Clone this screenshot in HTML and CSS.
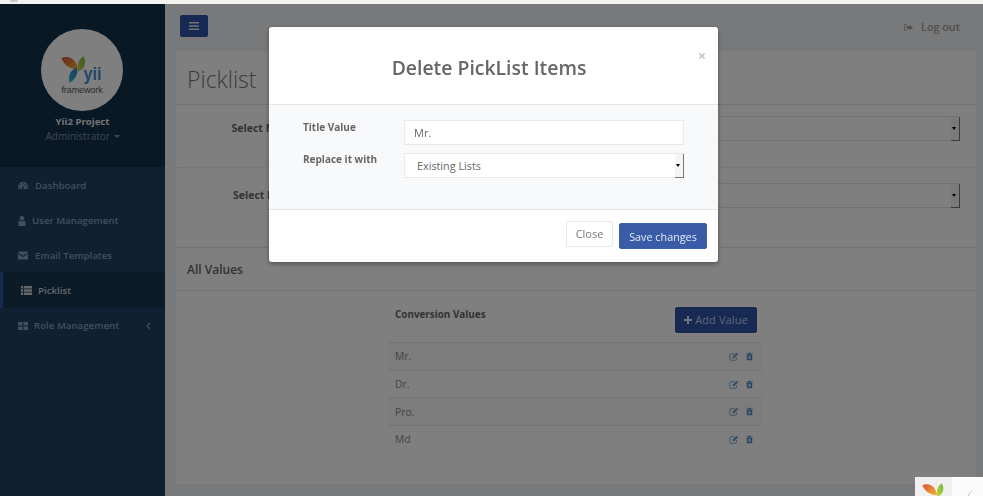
FILE: index.html
```html
<!DOCTYPE html>
<html lang="en">
<head>
<meta charset="utf-8">
<title>Picklist</title>
<link rel="stylesheet" href="styles.css">
</head>
<body>
<svg class="defs" width="0" height="0" aria-hidden="true">
  <defs>
    <linearGradient id="gOrange" x1="0" y1="0" x2="1" y2="1"><stop offset="0" stop-color="#d9503a"/><stop offset="1" stop-color="#f2b431"/></linearGradient>
    <linearGradient id="gGreen" x1="0" y1="1" x2="1" y2="0"><stop offset="0" stop-color="#c6d63c"/><stop offset="1" stop-color="#72b53f"/></linearGradient>
    <linearGradient id="gBlue" x1="1" y1="0" x2="0" y2="1"><stop offset="0" stop-color="#2f7fc0"/><stop offset="1" stop-color="#37b3d6"/></linearGradient>
    <symbol id="leaves" viewBox="0 0 30 32">
      <path d="M0.5 2.5C6 -0.5 15 1 18.5 11C19.3 13 19.6 14.5 19.6 15.5C15 14.8 5 14 0.5 2.5Z" fill="url(#gOrange)"/>
      <path d="M26 0C28.5 5 29 12 23 16C21.5 17 20.6 17.5 20 18C18.5 11 19.5 4 26 0Z" fill="url(#gGreen)"/>
      <path d="M18 13.5C20 16.5 19 25 10 31C8 24 9.5 17 18 13.5Z" fill="url(#gBlue)"/>
    </symbol>
    <symbol id="leaves-top" viewBox="0 0 30 20">
      <path d="M0.5 2.5C6 -0.5 15 1 18.5 11C19.3 13 19.6 14.5 19.6 15.5C15 14.8 5 14 0.5 2.5Z" fill="url(#gOrange)"/>
      <path d="M26 0C28.5 5 29 12 23 16C21.5 17 20.6 17.5 20 18C18.5 11 19.5 4 26 0Z" fill="url(#gGreen)"/>
    </symbol>
    <symbol id="i-edit" viewBox="0 0 14 13"><path d="M10.5 7.5V10.5A1.5 1.5 0 0 1 9 12H2.5A1.5 1.5 0 0 1 1 10.5V4A1.5 1.5 0 0 1 2.5 2.5H8" fill="none" stroke="currentColor" stroke-width="1.2"/><path d="M5 6.8L10.8 1L13 3.2L7.2 9H5Z" fill="currentColor"/></symbol>
    <symbol id="i-trash" viewBox="0 0 11 13"><path d="M4 0.5H7L7.7 2H10.5V3.2H0.5V2H3.3ZM1.3 4H9.7V11.2A1.3 1.3 0 0 1 8.4 12.5H2.6A1.3 1.3 0 0 1 1.3 11.2ZM3 5.5V11H4V5.5ZM5 5.5V11H6V5.5ZM7 5.5V11H8V5.5Z" fill="currentColor" fill-rule="evenodd"/></symbol>
  </defs>
</svg>

<div class="top-strip"><span class="top-mark"></span></div>
<div class="app">
  <aside class="sidebar">
    <div class="profile">
      <div class="avatar">
        <div class="yii-mark">
          <svg class="yii-leaves"><use href="#leaves"/></svg>
          <span class="yii-word">yii</span>
        </div>
        <span class="yii-framework">framework</span>
      </div>
      <div class="profile-name">Yii2 Project</div>
      <div class="profile-role">Administrator <span class="caret"></span></div>
    </div>
    <nav class="nav">
      <a class="nav-item">
        <svg class="nav-icon" viewBox="0 0 14 11"><path d="M7 0.5A7 7 0 0 0 0 7.5C0 8.8 0.3 9.8 0.9 10.5H13.1C13.7 9.8 14 8.8 14 7.5A7 7 0 0 0 7 0.5ZM7 2A1 1 0 1 1 7 4A1 1 0 0 1 7 2ZM3 3.5A1 1 0 1 1 3 5.5A1 1 0 0 1 3 3.5ZM11 3.5A1 1 0 1 1 11 5.5A1 1 0 0 1 11 3.5ZM2 6.8A1 1 0 1 1 2 8.8A1 1 0 0 1 2 6.8ZM12 6.8A1 1 0 1 1 12 8.8A1 1 0 0 1 12 6.8ZM9 4.5L9.7 4.9L8 7.8A1.4 1.4 0 1 1 7.2 7.4Z" fill="currentColor" fill-rule="evenodd"/></svg>
        <span>Dashboard</span>
      </a>
      <a class="nav-item nav-item-narrow">
        <svg class="nav-icon-user" viewBox="0 0 8 11"><path d="M4 0A2.6 2.6 0 1 1 4 5.2A2.6 2.6 0 0 1 4 0ZM1.4 5.2C2 5.8 3 6 4 6C5 6 6 5.8 6.6 5.2C7.6 5.4 8 6.4 8 9C8 10.2 7.4 11 6.4 11H1.6C0.6 11 0 10.2 0 9C0 6.4 0.4 5.4 1.4 5.2Z" fill="currentColor"/></svg>
        <span>User Management</span>
      </a>
      <a class="nav-item">
        <svg class="nav-icon" viewBox="0 0 14 11"><path d="M1 0H13A1 1 0 0 1 14 1V1.6L7 6L0 1.6V1A1 1 0 0 1 1 0ZM0 3.2L7 7.6L14 3.2V10A1 1 0 0 1 13 11H1A1 1 0 0 1 0 10Z" fill="currentColor"/></svg>
        <span>Email Templates</span>
      </a>
      <a class="nav-item nav-item-active">
        <svg class="nav-icon" viewBox="0 0 11 9"><path d="M0 0H2.2V2.4H0ZM3 0H11V2.4H3ZM0 3.3H2.2V5.7H0ZM3 3.3H11V5.7H3ZM0 6.6H2.2V9H0ZM3 6.6H11V9H3Z" fill="currentColor"/></svg>
        <span>Picklist</span>
      </a>
      <a class="nav-item nav-item-split">
        <svg class="nav-icon-grid" viewBox="0 0 10 8"><path d="M0 0H4.5V3.5H0ZM5.5 0H10V3.5H5.5ZM0 4.5H4.5V8H0ZM5.5 4.5H10V8H5.5Z" fill="currentColor"/></svg>
        <span class="nav-label">Role Management</span>
        <svg class="nav-angle" viewBox="0 0 5 8"><path d="M4 1L1 4L4 7" fill="none" stroke="currentColor" stroke-width="1.1"/></svg>
      </a>
    </nav>
  </aside>

  <main class="main">
    <header class="topbar">
      <button class="toggle" type="button" aria-label="Menu">
        <svg viewBox="0 0 10 8" width="10" height="8"><path d="M0 0H10V1.6H0ZM0 3.2H10V4.8H0ZM0 6.4H10V8H0Z" fill="currentColor"/></svg>
      </button>
      <a class="logout">
        <svg class="logout-icon" viewBox="0 0 11 9"><path d="M4 0.5V1.5H1.6C1.3 1.5 1 1.8 1 2.1V6.9C1 7.2 1.3 7.5 1.6 7.5H4V8.5H1.6C0.7 8.5 0 7.8 0 6.9V2.1C0 1.2 0.7 0.5 1.6 0.5ZM6.5 1L11 4.5L6.5 8V6H3V3H6.5Z" fill="currentColor"/></svg>
        <span>Log out</span>
      </a>
    </header>

    <section class="panel">
      <h1 class="panel-title">Picklist</h1>
      <div class="panel-form">
        <div class="form-row form-row-dotted">
          <label class="form-label">Select Module</label>
          <div class="select-box">
            <span class="select-arrow"></span>
          </div>
        </div>
        <div class="form-row">
          <label class="form-label">Select Picklist</label>
          <div class="select-box">
            <span class="select-arrow"></span>
          </div>
        </div>
      </div>
      <h2 class="section-title">All Values</h2>
      <div class="values">
        <div class="values-head">
          <strong class="values-title">Conversion Values</strong>
          <button class="add-btn" type="button"><svg class="add-plus" viewBox="0 0 8 8"><path d="M3 0H5V3H8V5H5V8H3V5H0V3H3Z" fill="currentColor"/></svg>Add Value</button>
        </div>
        <div class="value-row value-row-alt"><span>Mr.</span><span class="row-icons"><svg class="ic-edit"><use href="#i-edit"/></svg><svg class="ic-trash"><use href="#i-trash"/></svg></span></div>
        <div class="value-row"><span>Dr.</span><span class="row-icons"><svg class="ic-edit"><use href="#i-edit"/></svg><svg class="ic-trash"><use href="#i-trash"/></svg></span></div>
        <div class="value-row value-row-alt"><span>Pro.</span><span class="row-icons"><svg class="ic-edit"><use href="#i-edit"/></svg><svg class="ic-trash"><use href="#i-trash"/></svg></span></div>
        <div class="value-row"><span>Md</span><span class="row-icons"><svg class="ic-edit"><use href="#i-edit"/></svg><svg class="ic-trash"><use href="#i-trash"/></svg></span></div>
      </div>
    </section>
  </main>
</div>

<div class="backdrop"></div>

<div class="modal" role="dialog">
  <div class="modal-head">
    <h3 class="modal-title">Delete PickList Items</h3>
    <span class="modal-x">×</span>
  </div>
  <div class="modal-body">
    <div class="modal-row">
      <label class="modal-label">Title Value</label>
      <div class="modal-input">Mr.</div>
    </div>
    <div class="modal-row">
      <label class="modal-label modal-label-tight">Replace it with</label>
      <div class="select-box modal-select">Existing Lists<span class="select-arrow"></span></div>
    </div>
  </div>
  <div class="modal-foot">
    <button class="btn-close" type="button">Close</button>
    <button class="btn-save" type="button">Save changes</button>
  </div>
</div>

<div class="corner">
  <div class="corner-logo"><svg class="corner-leaves"><use href="#leaves-top"/></svg></div>
  <div class="corner-side"><svg class="corner-angle" viewBox="0 0 6 10"><path d="M5 1L1 5L5 9" fill="none" stroke="currentColor" stroke-width="1"/></svg></div>
</div>
</body>
</html>
```

FILE: styles.css
```css
* { box-sizing: border-box; }
html, body { margin: 0; height: 100%; overflow: hidden; }
body {
  font-family: "Open Sans", "Liberation Sans", sans-serif;
  font-size: 11px;
  color: #333;
  display: flex;
  flex-direction: column;
  background: #f2f1ee;
}
.defs { display: block; height: 0; }
.top-strip { height: 4px; flex: none; background: #f3f2ef; padding-left: 10px; }
.top-mark { display: block; width: 8px; height: 2px; background: #c9c9c6; border-radius: 0 0 4px 4px; }
.app { flex: 1; display: flex; min-height: 0; }

/* sidebar */
.sidebar { width: 165px; flex: none; background: #1c4064; display: flex; flex-direction: column; }
.profile { height: 163px; background: #12304a; padding-top: 25px; display: flex; flex-direction: column; align-items: center; }
.avatar {
  width: 82px; height: 82px; margin-right: 1px; border-radius: 50%; background: #fff;
  display: flex; flex-direction: column; align-items: center; padding-top: 26px;
}
.yii-mark { display: flex; align-items: flex-end; height: 29px; }
.yii-leaves { width: 26px; height: 28px; }
.yii-word { font-family: "Liberation Sans", sans-serif; font-weight: 700; font-size: 19px; line-height: 20px; color: #3d8ed0; margin-left: -5px; transform: scaleX(.85); }
.yii-framework { font-family: "Liberation Sans", sans-serif; font-size: 9px; line-height: 11px; color: #555; margin-top: 1px; letter-spacing: -.1px; }
.profile-name { margin-top: 4px; font-size: 9.6px; line-height: 14px; font-weight: 700; color: #e4e6e8; }
.profile-role { font-size: 10px; line-height: 14px; color: #7d90a4; }
.caret {
  display: inline-block; width: 0; height: 0; margin-left: 1px; vertical-align: 2px;
  border-top: 3px solid currentColor; border-left: 3px solid transparent; border-right: 3px solid transparent;
}
.nav { display: flex; flex-direction: column; padding-top: 1px; }
.nav-item {
  height: 35px; flex: none; display: flex; align-items: center; gap: 7px; padding-left: 18px;
  font-size: 9.7px; font-weight: 600; color: #82a0bd;
}
.nav-item-narrow { gap: 6px; }
.nav-item-active {
  height: 36px; margin-top: -1px; padding-left: 18px; background: #173650; color: #c8d0d8; gap: 6px;
  box-shadow: inset 3px 0 0 #2c54a8;
}
.nav-icon { width: 11px; height: 9px; flex: none; }
.nav-item:not(.nav-item-active) .nav-icon { width: 10px; }
.nav-item-active .nav-icon { margin-left: 3px; }
.nav-icon-user { width: 8px; height: 10px; flex: none; }
.nav-icon-grid { width: 10px; height: 8px; flex: none; }
.nav-item-split { gap: 6px; }
.nav-label { flex: 1; }
.nav-angle { width: 5px; height: 8px; margin-right: 14px; flex: none; }

/* main */
.main { flex: 1; min-width: 0; background: #f0f2f4; padding: 0 7px 0 11px; display: flex; flex-direction: column; }
.topbar { height: 47px; flex: none; display: flex; justify-content: space-between; align-items: flex-start; padding: 11px 16px 0 4px; }
.toggle {
  width: 28px; height: 22px; padding: 0; border: 1px solid #2a50a2; border-radius: 2px;
  background: #2c54a8; color: #e6e6e6; display: flex; align-items: center; justify-content: center;
}
.logout { display: flex; align-items: center; gap: 8px; font-size: 10.8px; font-weight: 600; color: #a0a0a0; line-height: 16px; margin-top: 4px; }
.logout-icon { width: 9px; height: 9px; }

.panel { height: 433px; flex: none; background: #fff; display: flex; flex-direction: column; }
.panel-title {
  margin: 0; height: 54px; padding: 10px 11px 0; font-size: 23px; line-height: 36px;
  font-weight: 300; color: #777; border-bottom: 1px solid #e6e6e6;
}
.panel-form { height: 143px; flex: none; padding-top: 11px; border-bottom: 1px solid #e6e6e6; }
.form-row { display: flex; padding: 0 16px 0 0; height: 25px; }
.form-row-dotted { height: 52px; margin-bottom: 15px; border-bottom: 1px dotted #e2e2e2; }
.form-label { width: 129px; text-align: right; font-size: 10.5px; font-weight: 700; color: #666; line-height: 24px; white-space: nowrap; flex: none; }
.form-row .select-box { flex: 1; margin-left: 17px; }
.select-box {
  position: relative; height: 25px; background: #fff; border: 1px solid #e3e3e3;
}
.select-arrow {
  position: absolute; right: -1px; top: 0; bottom: -1px; width: 9px;
  background: #f4f4f4; border-right: 1px solid #777; border-bottom: 1px solid #777;
}
.select-arrow::after {
  content: ""; position: absolute; left: 1px; top: 10px; width: 0; height: 0;
  border-top: 3px solid #000; border-left: 2.5px solid transparent; border-right: 2.5px solid transparent;
}
.section-title { margin: 0; height: 43px; padding: 13px 11px 0; font-size: 12px; line-height: 18px; font-weight: 600; color: #666; border-bottom: 1px solid #e6e6e6; flex: none; }
.values { margin: 0 214px 0 213px; padding-top: 16px; }
.values-head { display: flex; justify-content: space-between; align-items: flex-start; height: 35px; padding: 0 5px 0 6px; }
.values-title { font-size: 9.9px; font-weight: 700; color: #666; line-height: 14px; }
.add-btn {
  width: 82px; height: 26px; padding: 0; border: 1px solid #2a50a2; border-radius: 2px;
  background: #2c54a8; color: #c0cfee; font-family: inherit; font-size: 11px; line-height: 20px; letter-spacing: .1px;
  display: flex; align-items: center; justify-content: center; gap: 3px;
}
.add-plus { width: 8px; height: 8px; color: #e3e9f6; flex: none; }
.value-row {
  height: 27.7px; display: flex; justify-content: space-between; align-items: center;
  padding: 0 9px 0 6px; border-top: 1px solid #eaeaea; font-size: 10.3px; color: #888; background: #fff;
}
.value-row-alt { background: #f8f8f8; }
.row-icons { display: flex; gap: 7px; align-items: center; }
.ic-edit { width: 10px; height: 9px; color: #6a9cc8; }
.ic-trash { width: 7px; height: 9px; color: #3f7fbf; }

/* overlay */
.backdrop { position: fixed; left: 0; right: 0; top: 4px; bottom: 0; background: rgba(0, 0, 0, .5); }
.modal {
  position: fixed; left: 269px; top: 27px; width: 449px; height: 235px; background: #fff;
  border-radius: 3px; box-shadow: 0 2px 5px rgba(0, 0, 0, .35); display: flex; flex-direction: column;
}
.modal-head { height: 78px; flex: none; position: relative; border-bottom: 1px solid #e5e5e5; text-align: center; padding-right: 9px; }
.modal-title { margin: 0; padding-top: 27px; font-size: 19.4px; line-height: 28px; font-weight: 600; color: #666; }
.modal-x { position: absolute; right: 12px; top: 21px; font-size: 14px; line-height: 16px; font-weight: 700; color: #c4c4c4; }
.modal-body { height: 105px; flex: none; background: #f8f9fb; border-bottom: 1px solid #e5e5e5; padding: 15px 34px 0; display: flex; flex-direction: column; gap: 8px; }
.modal-row { display: flex; height: 25px; }
.modal-label { width: 101px; flex: none; font-size: 10px; font-weight: 700; color: #666; line-height: 14px; }
.modal-label-tight { margin-top: -1px; }
.modal-input { flex: 1; background: #fff; border: 1px solid #e9e9e9; padding-left: 9px; font-size: 11px; line-height: 24px; color: #666; }
.modal-select { flex: 1; padding-left: 12px; font-size: 10.8px; line-height: 24px; color: #666; border-color: #e9e9e9; }
.modal-foot { flex: 1; display: flex; justify-content: flex-end; align-items: flex-start; gap: 6px; padding: 11px 11px 0 0; }
.btn-close {
  width: 47px; height: 26px; padding: 0; background: #fff; border: 1px solid #e8e8e8; border-radius: 2px;
  font-family: inherit; font-size: 11px; line-height: 22px; color: #777;
}
.btn-save {
  width: 88px; height: 26px; padding: 0; margin-top: 2px; background: #3a5ca8; border: 1px solid #3a62ad; border-radius: 2px;
  font-family: inherit; font-size: 10.8px; color: #e6ebf5;
}

/* corner widget */
.corner { position: fixed; right: 0; bottom: 0; width: 68px; height: 19px; display: flex; overflow: hidden; }
.corner-logo { width: 37px; background: #f0f0f0; padding: 6px 0 0 7px; }
.corner-leaves { width: 23px; height: 16px; display: block; }
.corner-side { flex: 1; background: #fbfbfb; color: #c9c9c9; padding: 13px 0 0 15px; }
.corner-angle { width: 6px; height: 10px; display: block; }
```
